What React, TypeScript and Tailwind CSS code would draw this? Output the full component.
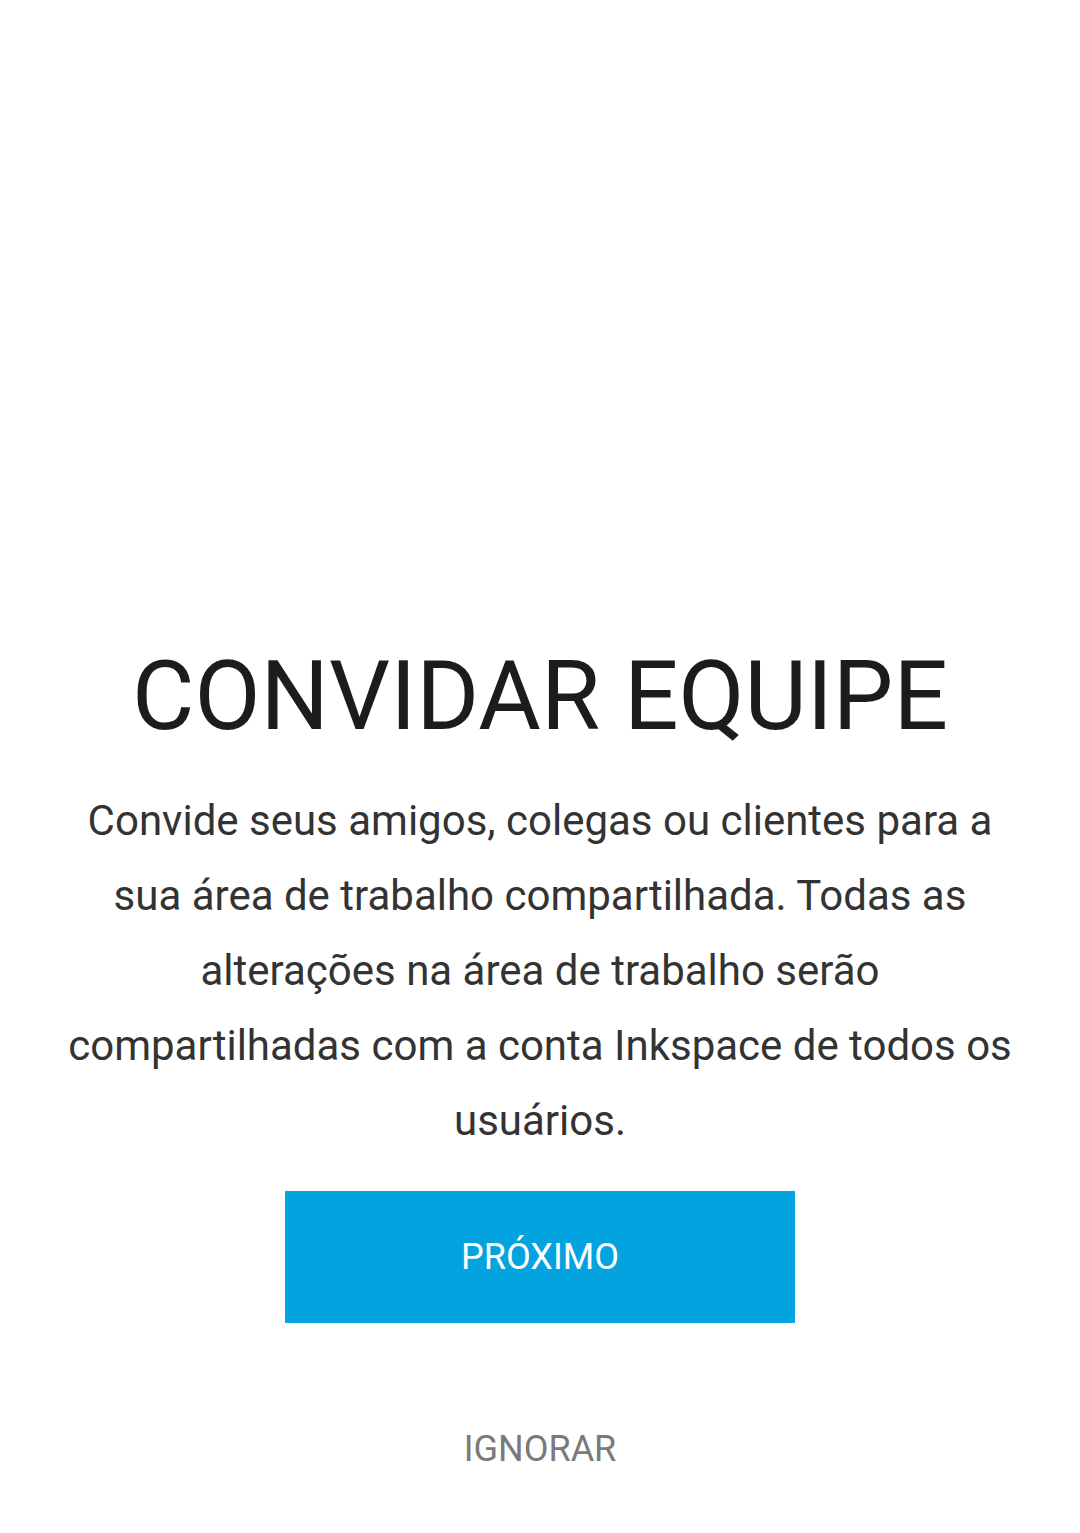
import React from "react";

export default function App() {
  const handleNext = () => {};
  const handleSkip = () => {};

  return (
    <div className="min-h-screen bg-white font-['Roboto','Liberation_Sans',sans-serif]">
      <div className="mx-auto flex w-[1080px] flex-col items-center px-[60px] pt-[648px]">
        <h1 className="text-[96px] leading-[96px] font-normal text-[#1c1c1c]">CONVIDAR EQUIPE</h1>

        <p className="mt-[39px] text-center text-[42px] leading-[75px] text-[#333333]">
          Convide seus amigos, colegas ou clientes para a sua área de trabalho compartilhada. Todas as
          alterações na área de trabalho serão compartilhadas com a conta Inkspace de todos os usuários.
        </p>

        <button
          type="button"
          onClick={handleNext}
          className="mt-[33px] h-[132px] w-[510px] bg-[#03a3e0] text-[36px] text-white"
        >
          PRÓXIMO
        </button>

        <button
          type="button"
          onClick={handleSkip}
          className="mt-[101px] text-[36px] leading-[50px] text-[#7a7a7a]"
        >
          IGNORAR
        </button>
      </div>
    </div>
  );
}
